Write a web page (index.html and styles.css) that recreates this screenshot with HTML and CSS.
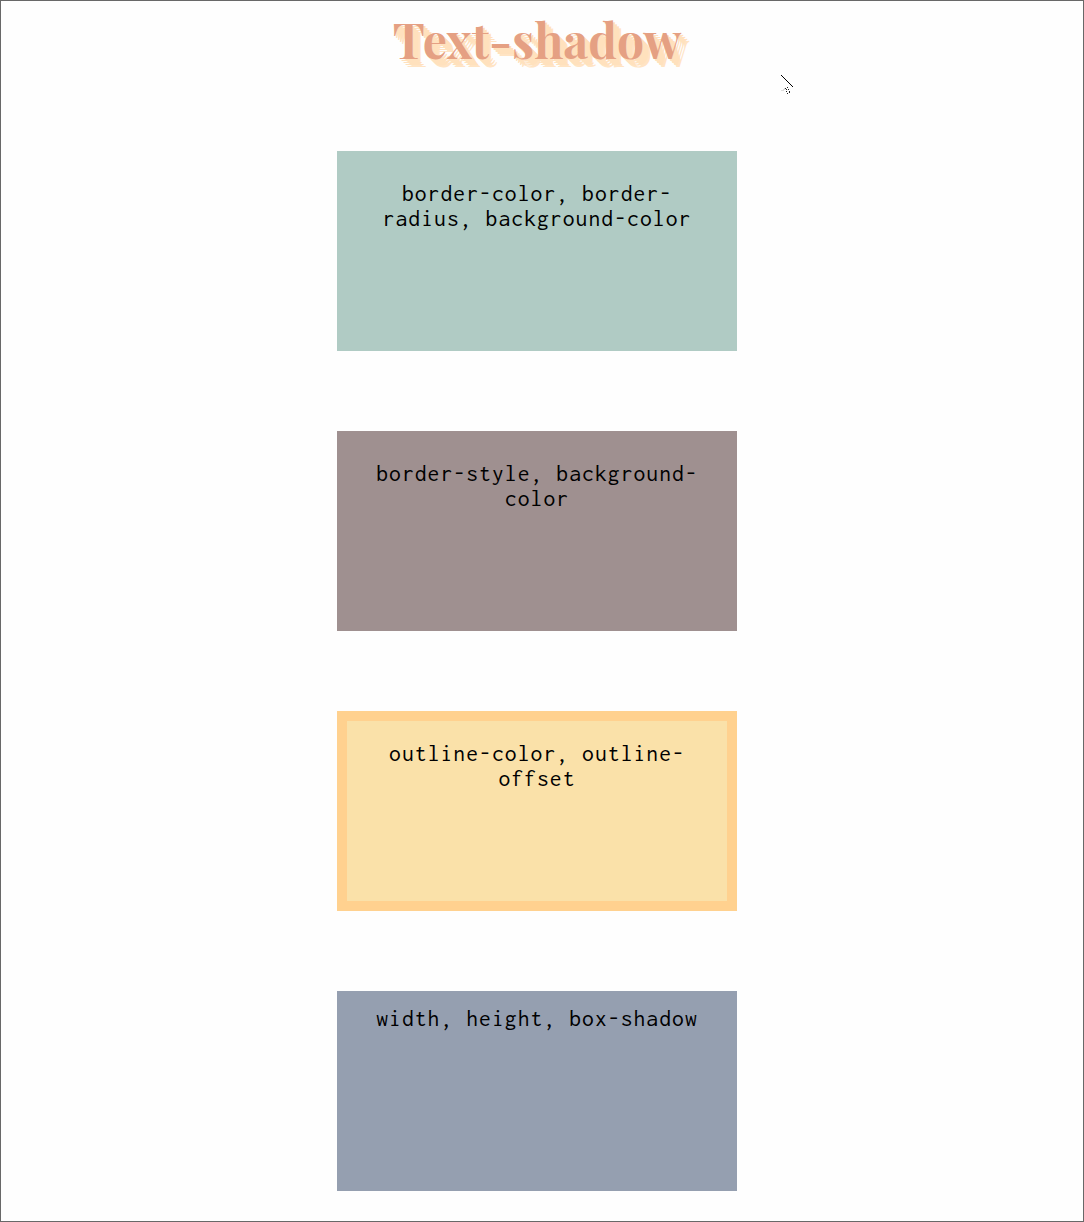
FILE: index.html
```html
<!DOCTYPE html>
<html lang="en">
<head>
<meta charset="utf-8">
<title>Text-shadow</title>
<link rel="stylesheet" href="styles.css">
</head>
<body>
<main class="page">
  <h1 class="title">Text-shadow</h1>
  <div class="box box-green">border-color, border-radius, background-color</div>
  <div class="box box-mauve">border-style, background-color</div>
  <div class="box box-yellow">outline-color, outline-offset</div>
  <div class="box box-blue">width, height, box-shadow</div>
  <svg class="cursor" width="16" height="22" viewBox="0 0 16 22" shape-rendering="crispEdges" fill="none">
    <path d="M1 0h1v1h1v1h1v1h1v1h1v1h1v1h1v1h1v1h1v1h1v1h1v1h1v1h-1v-1h-1v-1h-1v-1h-1v-1h-1v-1h-1v-1h-1v-1h-1v-1h-1v-1h-1v-1h-1v-1h-1z" fill="#000"/>
    <path d="M1 15h2v-1h1v-1h2v1h-1v1h-1v1h-3z" fill="#ddd"/>
    <path d="M5 13h1v1h-1zM7 12h1v1h-1zM6 14h1v1h-1zM8 14h1v1h-1zM6 16h1v1h-1zM9 16h1v1h-1zM7 18h1v1h-1zM9 17h1v1h-1z" fill="#222"/>
  </svg>
</main>
</body>
</html>
```
FILE: styles.css
```css
* {
  box-sizing: border-box;
}

body {
  margin: 0;
}

.page {
  position: relative;
  display: flex;
  flex-direction: column;
  align-items: center;
  gap: 80px;
  height: 1222px;
  padding: 10px 10px 0 0;
  border: 1px solid #686868;
  background: #fefefe;
}

.title {
  height: 60px;
  margin: 0;
  color: #e5a083;
  font: bold 48px/56px "Playfair Display", "Liberation Serif", serif;
  text-shadow:
    2px 2px #ffe1bd, 4px 4px #ffe1bd, 6px 6px #ffe1bd, 8px 8px #ffe4c4;
}

.box {
  flex: none;
  width: 400px;
  height: 200px;
  padding: 30px 30px 0;
  color: #000;
  font: 23.6px/25px Inconsolata, "Liberation Mono", monospace;
  letter-spacing: 1.07px;
  text-align: center;
}

.box-green {
  background: #b0cbc4;
}

.box-mauve {
  background: #9f9090;
}

.box-yellow {
  background: #fae1a9;
  outline: 10px solid #ffd18f;
  outline-offset: -10px;
}

.box-blue {
  padding-top: 15px;
  background: #959fb0;
}

.cursor {
  position: absolute;
  left: 779px;
  top: 74px;
}
```
